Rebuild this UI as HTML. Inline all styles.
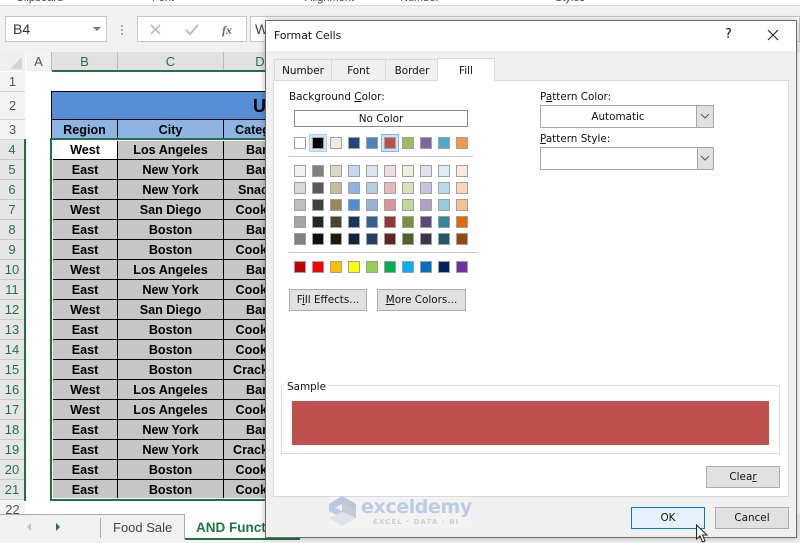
<!DOCTYPE html>
<html>
<head>
<meta charset="utf-8">
<style>
html,body{margin:0;padding:0;width:800px;height:543px;overflow:hidden;background:#fff}
body{position:relative;font-family:"DejaVu Sans","Liberation Sans",sans-serif;font-size:10.4px;color:#111}
.a{position:absolute}
.t{position:absolute;white-space:nowrap;line-height:14px}
.u{text-decoration:underline}
.rh{position:absolute;left:0;width:24px;background:#e6e6e6;border-bottom:1px solid #c8c8c8;text-align:center;font:13px/20px "Liberation Sans",sans-serif;color:#217346;height:19px}
.rn{position:absolute;left:0;width:25px;background:#f3f3f3;border-bottom:1px solid #d0d0d0;text-align:center;font:13px/20px "Liberation Sans",sans-serif;color:#555;height:19px}
.ch{position:absolute;top:52px;height:19px;background:#e1e1e1;text-align:center;font:13px/19px "Liberation Sans",sans-serif;color:#217346;border-right:1px solid #bbb}
.c{position:absolute;height:18px;background:#c6c6c6;text-align:center;font:bold 12.6px/21px "Liberation Sans",sans-serif;color:#000;overflow:hidden;white-space:nowrap}
.b{position:absolute;background:#e1e1e1;border:1px solid #adadad;box-sizing:border-box;text-align:center;line-height:21px;white-space:nowrap}
.s{position:absolute;width:12px;height:12px;border:1px solid #a0a0a0;box-sizing:border-box}
.tab{position:absolute;top:59px;height:21px;background:#f0f0f0;border:1px solid #d9d9d9;border-bottom:0;box-sizing:border-box;text-align:center;line-height:23px}
</style>
</head>
<body>
<!-- Ribbon remains -->
<div class="a" style="left:0;top:0;width:800px;height:5px;background:#fff"></div>
<div class="a" style="left:0;top:-9px;width:800px;height:13px;font:11px/13px 'Liberation Sans',sans-serif;color:#444;white-space:nowrap">
<span class="a" style="left:16px;top:1px">Clipboard</span><span class="a" style="left:152px;top:1px">Font</span><span class="a" style="left:305px;top:1px">Alignment</span><span class="a" style="left:400px;top:1px">Number</span><span class="a" style="left:555px;top:1px">Styles</span></div>
<div class="a" style="left:0;top:5px;width:800px;height:47px;background:#f1f1f1;border-top:1px solid #d8d8d8;box-sizing:border-box"></div>
<div class="a" style="left:5px;top:16px;width:102px;height:26px;background:#fff;border:1px solid #c6c6c6;box-sizing:border-box;font:14px/24px 'Liberation Sans',sans-serif;color:#333;padding-left:7px">B4</div>
<div class="a" style="left:93px;top:27px;width:0;height:0;border-left:4px solid transparent;border-right:4px solid transparent;border-top:4px solid #777"></div>
<div class="a" style="left:121px;top:25px;width:2px;height:2px;background:#aaa;box-shadow:0 4px 0 #aaa,0 8px 0 #aaa"></div>
<div class="a" style="left:137px;top:16px;width:110px;height:26px;background:#fff;border:1px solid #c6c6c6;box-sizing:border-box"></div>
<svg class="a" style="left:148px;top:22px" width="90" height="16" viewBox="0 0 90 16"><path d="M3 3l9 9M12 3l-9 9" stroke="#bdbdbd" stroke-width="1.6" fill="none"/><path d="M38 8l4 4 8-9" stroke="#bdbdbd" stroke-width="2" fill="none"/><text x="74" y="12" font-family="Liberation Serif" font-style="italic" font-weight="bold" font-size="12" fill="#666">fx</text></svg>
<div class="a" style="left:250px;top:16px;width:550px;height:26px;background:#fff;border:1px solid #c6c6c6;box-sizing:border-box;font:14px/24px 'Liberation Sans',sans-serif;color:#444;padding-left:4px">W</div>

<!-- Sheet -->
<div class="a" style="left:0;top:52px;width:800px;height:470px;background:#fff"></div>
<div class="a" style="left:0;top:52px;width:25px;height:19px;background:#efefef"></div>
<div class="a" style="left:10px;top:57px;width:0;height:0;border-left:12px solid transparent;border-bottom:12px solid #d4d4d4"></div>
<div class="ch" style="left:26px;width:25px;background:#f3f3f3;color:#555">A</div>
<div class="ch" style="left:52px;width:65px">B</div>
<div class="ch" style="left:118px;width:105px">C</div>
<div class="ch" style="left:224px;width:72px">D</div>
<div class="a" style="left:52px;top:70px;width:248px;height:2px;background:#217346"></div>

<div class="rn" style="top:72px">1</div>
<div class="rn" style="top:92px;height:27px;line-height:28px">2</div>
<div class="rn" style="top:120px">3</div>
<div class="rh" style="top:140px">4</div><div class="rh" style="top:160px">5</div><div class="rh" style="top:180px">6</div><div class="rh" style="top:200px">7</div><div class="rh" style="top:220px">8</div><div class="rh" style="top:240px">9</div><div class="rh" style="top:260px">10</div><div class="rh" style="top:280px">11</div><div class="rh" style="top:300px">12</div><div class="rh" style="top:320px">13</div><div class="rh" style="top:340px">14</div><div class="rh" style="top:360px">15</div><div class="rh" style="top:380px">16</div><div class="rh" style="top:400px">17</div><div class="rh" style="top:420px">18</div><div class="rh" style="top:440px">19</div><div class="rh" style="top:460px">20</div><div class="rh" style="top:480px">21</div>
<div class="rn" style="top:500px">22</div>
<div class="a" style="left:24px;top:139px;width:2px;height:362px;background:#217346"></div>

<!-- Table -->
<div class="a" style="left:51px;top:91px;width:260px;height:409px;background:#000"></div>
<div class="a" style="left:52px;top:92px;width:259px;height:27px;background:#558ed5;font:bold 18px/29px 'Liberation Sans',sans-serif;color:#000;text-indent:201px">U</div>
<div class="c" style="left:52px;top:120px;width:65px;background:#8db4e2;height:19px">Region</div>
<div class="c" style="left:118px;top:120px;width:105px;background:#8db4e2;height:19px">City</div>
<div class="c" style="left:224px;top:120px;width:80px;background:#8db4e2;height:19px;text-align:left;padding-left:11px">Category</div>

<div class="c" style="left:53px;top:141px;width:64px;background:#fff;line-height:19px">West</div><div class="c" style="left:118px;top:141px;width:105px;line-height:19px">Los Angeles</div><div class="c" style="left:224px;top:141px;width:72px;line-height:19px">Bars</div>
<div class="c" style="left:53px;top:160px;width:64px;height:19px">East</div><div class="c" style="left:118px;top:160px;width:105px;height:19px">New York</div><div class="c" style="left:224px;top:160px;width:72px;height:19px">Bars</div>
<div class="c" style="left:53px;top:180px;width:64px;height:19px">East</div><div class="c" style="left:118px;top:180px;width:105px;height:19px">New York</div><div class="c" style="left:224px;top:180px;width:72px;height:19px">Snacks</div>
<div class="c" style="left:53px;top:200px;width:64px;height:19px">West</div><div class="c" style="left:118px;top:200px;width:105px;height:19px">San Diego</div><div class="c" style="left:224px;top:200px;width:72px;height:19px">Cookies</div>
<div class="c" style="left:53px;top:220px;width:64px;height:19px">East</div><div class="c" style="left:118px;top:220px;width:105px;height:19px">Boston</div><div class="c" style="left:224px;top:220px;width:72px;height:19px">Bars</div>
<div class="c" style="left:53px;top:240px;width:64px;height:19px">East</div><div class="c" style="left:118px;top:240px;width:105px;height:19px">Boston</div><div class="c" style="left:224px;top:240px;width:72px;height:19px">Cookies</div>
<div class="c" style="left:53px;top:260px;width:64px;height:19px">West</div><div class="c" style="left:118px;top:260px;width:105px;height:19px">Los Angeles</div><div class="c" style="left:224px;top:260px;width:72px;height:19px">Bars</div>
<div class="c" style="left:53px;top:280px;width:64px;height:19px">East</div><div class="c" style="left:118px;top:280px;width:105px;height:19px">New York</div><div class="c" style="left:224px;top:280px;width:72px;height:19px">Cookies</div>
<div class="c" style="left:53px;top:300px;width:64px;height:19px">West</div><div class="c" style="left:118px;top:300px;width:105px;height:19px">San Diego</div><div class="c" style="left:224px;top:300px;width:72px;height:19px">Bars</div>
<div class="c" style="left:53px;top:320px;width:64px;height:19px">East</div><div class="c" style="left:118px;top:320px;width:105px;height:19px">Boston</div><div class="c" style="left:224px;top:320px;width:72px;height:19px">Cookies</div>
<div class="c" style="left:53px;top:340px;width:64px;height:19px">East</div><div class="c" style="left:118px;top:340px;width:105px;height:19px">Boston</div><div class="c" style="left:224px;top:340px;width:72px;height:19px">Cookies</div>
<div class="c" style="left:53px;top:360px;width:64px;height:19px">East</div><div class="c" style="left:118px;top:360px;width:105px;height:19px">Boston</div><div class="c" style="left:224px;top:360px;width:72px;height:19px">Crackers</div>
<div class="c" style="left:53px;top:380px;width:64px;height:19px">West</div><div class="c" style="left:118px;top:380px;width:105px;height:19px">Los Angeles</div><div class="c" style="left:224px;top:380px;width:72px;height:19px">Bars</div>
<div class="c" style="left:53px;top:400px;width:64px;height:19px">West</div><div class="c" style="left:118px;top:400px;width:105px;height:19px">Los Angeles</div><div class="c" style="left:224px;top:400px;width:72px;height:19px">Cookies</div>
<div class="c" style="left:53px;top:420px;width:64px;height:19px">East</div><div class="c" style="left:118px;top:420px;width:105px;height:19px">New York</div><div class="c" style="left:224px;top:420px;width:72px;height:19px">Bars</div>
<div class="c" style="left:53px;top:440px;width:64px;height:19px">East</div><div class="c" style="left:118px;top:440px;width:105px;height:19px">New York</div><div class="c" style="left:224px;top:440px;width:72px;height:19px">Crackers</div>
<div class="c" style="left:53px;top:460px;width:64px;height:19px">East</div><div class="c" style="left:118px;top:460px;width:105px;height:19px">Boston</div><div class="c" style="left:224px;top:460px;width:72px;height:19px">Cookies</div>
<div class="c" style="left:53px;top:480px;width:64px;height:18px">East</div><div class="c" style="left:118px;top:480px;width:105px;height:18px">Boston</div><div class="c" style="left:224px;top:480px;width:72px;height:18px">Cookies</div>
<!-- selection border -->
<div class="a" style="left:50px;top:138px;width:270px;height:363px;border:2px solid #217346;box-sizing:border-box"></div>
<div class="a" style="left:52px;top:140px;width:268px;height:1px;background:#fff"></div>
<div class="a" style="left:52px;top:498px;width:268px;height:1px;background:#fff"></div>
<div class="a" style="left:52px;top:140px;width:1px;height:359px;background:#fff"></div>

<!-- Bottom tabs -->
<div class="a" style="left:0;top:514px;width:800px;height:29px;background:#f1f1f1"></div>
<div class="a" style="left:0;top:514px;width:184px;height:1px;background:#ababab"></div>
<div class="a" style="left:27px;top:523px;width:0;height:0;border-top:4px solid transparent;border-bottom:4px solid transparent;border-right:4px solid #c4c4c4"></div>
<div class="a" style="left:56px;top:523px;width:0;height:0;border-top:4px solid transparent;border-bottom:4px solid transparent;border-left:4px solid #217346"></div>
<div class="a" style="left:100px;top:518px;width:1px;height:20px;background:#ababab"></div>
<div class="a" style="left:184px;top:514px;width:1px;height:25px;background:#ababab"></div>
<div class="t" style="left:113px;top:520px;font:13px/16px 'Liberation Sans',sans-serif;color:#444">Food Sale</div>
<div class="a" style="left:185px;top:514px;width:115px;height:24px;background:#fff;border-bottom:2px solid #217346"></div>
<div class="t" style="left:196px;top:520px;font:bold 13.5px/16px 'Liberation Sans',sans-serif;color:#217346">AND Function</div>

<!-- Dialog -->
<div class="a" style="left:265px;top:20px;width:532px;height:518px;background:#f0f0f0;border:1px solid #6e6e6e;box-sizing:border-box;box-shadow:0 0 6px rgba(0,0,0,.3)"></div>
<div class="a" style="left:266px;top:21px;width:530px;height:30px;background:#fff"></div>
<div class="t" style="left:274px;top:29px;font-size:10.8px">Format Cells</div>
<div class="t" style="left:725px;top:28px;font-size:13px">?</div>
<svg class="a" style="left:767px;top:29px" width="12" height="12" viewBox="0 0 12 12"><path d="M1 1l10 10M11 1L1 11" stroke="#222" stroke-width="1.1" fill="none"/></svg>

<div class="tab" style="left:274px;width:58px">Number</div>
<div class="tab" style="left:331px;width:55px">Font</div>
<div class="tab" style="left:385px;width:54px">Border</div>
<div class="a" style="left:273px;top:80px;width:516px;height:417px;background:#fff;border:1px solid #d9d9d9;box-sizing:border-box"></div>
<div class="tab" style="left:437px;top:58px;width:58px;height:23px;background:#fff;line-height:24px;z-index:2">Fill</div>

<div class="t" style="left:289px;top:90px">Background <span class="u">C</span>olor:</div>
<div class="a" style="left:294px;top:110px;width:174px;height:17px;border:1px solid #8a8a8a;box-sizing:border-box;text-align:center;line-height:17px;background:#fff">No Color</div>

<!-- Theme row -->
<div class="a" style="left:309px;top:134px;width:18px;height:18px;background:#cfe5f7;border:1px solid #a9d2f3;box-sizing:border-box"></div>
<div class="a" style="left:381px;top:134px;width:18px;height:18px;background:#cfe5f7;border:1px solid #7bb8ea;box-sizing:border-box"></div>
<div class="s" style="left:294px;top:137px;background:#fff"></div><div class="s" style="left:312px;top:137px;background:#000"></div><div class="s" style="left:330px;top:137px;background:#eeece1"></div><div class="s" style="left:348px;top:137px;background:#1f497d"></div><div class="s" style="left:366px;top:137px;background:#4f81bd"></div><div class="s" style="left:384px;top:137px;background:#c0504d"></div><div class="s" style="left:402px;top:137px;background:#9bbb59"></div><div class="s" style="left:420px;top:137px;background:#8064a2"></div><div class="s" style="left:438px;top:137px;background:#4bacc6"></div><div class="s" style="left:456px;top:137px;background:#f79646"></div>
<div class="a" style="left:289px;top:156px;width:184px;height:1px;background:#c8c8c8"></div>

<div class="s" style="left:294px;top:165px;background:#f2f2f2"></div><div class="s" style="left:312px;top:165px;background:#808080"></div><div class="s" style="left:330px;top:165px;background:#ddd9c4"></div><div class="s" style="left:348px;top:165px;background:#c5d9f1"></div><div class="s" style="left:366px;top:165px;background:#dce6f1"></div><div class="s" style="left:384px;top:165px;background:#f2dcdb"></div><div class="s" style="left:402px;top:165px;background:#ebf1de"></div><div class="s" style="left:420px;top:165px;background:#e4dfec"></div><div class="s" style="left:438px;top:165px;background:#daeef3"></div><div class="s" style="left:456px;top:165px;background:#fde9d9"></div>
<div class="s" style="left:294px;top:182px;background:#d9d9d9"></div><div class="s" style="left:312px;top:182px;background:#595959"></div><div class="s" style="left:330px;top:182px;background:#c4bd97"></div><div class="s" style="left:348px;top:182px;background:#8db4e2"></div><div class="s" style="left:366px;top:182px;background:#b8cce4"></div><div class="s" style="left:384px;top:182px;background:#e6b8b7"></div><div class="s" style="left:402px;top:182px;background:#d8e4bc"></div><div class="s" style="left:420px;top:182px;background:#ccc0da"></div><div class="s" style="left:438px;top:182px;background:#b7dee8"></div><div class="s" style="left:456px;top:182px;background:#fcd5b4"></div>
<div class="s" style="left:294px;top:199px;background:#bfbfbf"></div><div class="s" style="left:312px;top:199px;background:#404040"></div><div class="s" style="left:330px;top:199px;background:#948a54"></div><div class="s" style="left:348px;top:199px;background:#538dd5"></div><div class="s" style="left:366px;top:199px;background:#95b3d7"></div><div class="s" style="left:384px;top:199px;background:#da9694"></div><div class="s" style="left:402px;top:199px;background:#c4d79b"></div><div class="s" style="left:420px;top:199px;background:#b1a0c7"></div><div class="s" style="left:438px;top:199px;background:#92cddc"></div><div class="s" style="left:456px;top:199px;background:#fabf8f"></div>
<div class="s" style="left:294px;top:216px;background:#a6a6a6"></div><div class="s" style="left:312px;top:216px;background:#262626"></div><div class="s" style="left:330px;top:216px;background:#494529"></div><div class="s" style="left:348px;top:216px;background:#16365c"></div><div class="s" style="left:366px;top:216px;background:#366092"></div><div class="s" style="left:384px;top:216px;background:#963634"></div><div class="s" style="left:402px;top:216px;background:#76933c"></div><div class="s" style="left:420px;top:216px;background:#60497a"></div><div class="s" style="left:438px;top:216px;background:#31869b"></div><div class="s" style="left:456px;top:216px;background:#e26b0a"></div>
<div class="s" style="left:294px;top:233px;background:#808080"></div><div class="s" style="left:312px;top:233px;background:#0d0d0d"></div><div class="s" style="left:330px;top:233px;background:#1d1b10"></div><div class="s" style="left:348px;top:233px;background:#0f243e"></div><div class="s" style="left:366px;top:233px;background:#244062"></div><div class="s" style="left:384px;top:233px;background:#632523"></div><div class="s" style="left:402px;top:233px;background:#4f6228"></div><div class="s" style="left:420px;top:233px;background:#403151"></div><div class="s" style="left:438px;top:233px;background:#215967"></div><div class="s" style="left:456px;top:233px;background:#974706"></div>
<div class="a" style="left:289px;top:252px;width:189px;height:1px;background:#c8c8c8"></div>
<div class="s" style="left:294px;top:261px;background:#c00000"></div><div class="s" style="left:312px;top:261px;background:#ff0000"></div><div class="s" style="left:330px;top:261px;background:#ffc000"></div><div class="s" style="left:348px;top:261px;background:#ffff00"></div><div class="s" style="left:366px;top:261px;background:#92d050"></div><div class="s" style="left:384px;top:261px;background:#00b050"></div><div class="s" style="left:402px;top:261px;background:#00b0f0"></div><div class="s" style="left:420px;top:261px;background:#0070c0"></div><div class="s" style="left:438px;top:261px;background:#002060"></div><div class="s" style="left:456px;top:261px;background:#7030a0"></div>

<div class="b" style="left:289px;top:289px;width:78px;height:22px">F<span class="u">i</span>ll Effects...</div>
<div class="b" style="left:377px;top:289px;width:89px;height:22px"><span class="u">M</span>ore Colors...</div>

<div class="t" style="left:540px;top:90px">P<span class="u">a</span>ttern Color:</div>
<div class="a" style="left:540px;top:105px;width:174px;height:23px;background:#fff;border:1px solid #a6a6a6;box-sizing:border-box;text-align:center;line-height:23px;padding-right:18px">Automatic</div>
<div class="a" style="left:696px;top:106px;width:17px;height:21px;background:#e1e1e1;border-left:1px solid #a6a6a6;box-sizing:border-box"></div>
<svg class="a" style="left:700px;top:113px" width="10" height="7" viewBox="0 0 10 7"><path d="M1 1l4 4 4-4" stroke="#555" fill="none"/></svg>
<div class="t" style="left:540px;top:132px"><span class="u">P</span>attern Style:</div>
<div class="a" style="left:540px;top:147px;width:174px;height:23px;background:#fff;border:1px solid #a6a6a6;box-sizing:border-box"></div>
<div class="a" style="left:697px;top:148px;width:16px;height:21px;background:#e1e1e1;border-left:1px solid #a6a6a6;box-sizing:border-box"></div>
<svg class="a" style="left:700px;top:155px" width="10" height="7" viewBox="0 0 10 7"><path d="M1 1l4 4 4-4" stroke="#555" fill="none"/></svg>

<!-- Sample -->
<div class="a" style="left:281px;top:385px;width:499px;height:69px;border:1px solid #dcdcdc;box-sizing:border-box"></div>
<div class="t" style="left:284px;top:380px;background:#fff;padding:0 3px">Sample</div>
<div class="a" style="left:292px;top:401px;width:477px;height:44px;background:#c0504d"></div>

<div class="b" style="left:706px;top:466px;width:74px;height:22px">Clea<span class="u">r</span></div>

<!-- Watermark -->
<div class="a" style="left:329px;top:497px;width:142px;height:31px;background:rgba(255,255,255,.2)"></div>
<svg class="a" style="left:328px;top:495px" width="30" height="32" viewBox="0 0 30 32"><path d="M14 1l14 8v7L14 9 1 16V9z" fill="#b9c6dc"/><path d="M1 9l13 7v7L1 16z" fill="#b5cdee"/><path d="M1 23l13-6 14 6-14 8z" fill="#dde4ea"/><path d="M14 9l14 7v7l-14-6z" fill="#c8ccd0"/></svg>
<div class="t" style="left:361px;top:495px;font:bold 19px/24px 'DejaVu Sans',sans-serif;color:#bccbe9;letter-spacing:-.4px">exceldemy</div>
<div class="t" style="left:373px;top:516px;font:bold 7px/12px 'DejaVu Sans',sans-serif;color:#cfcfcf;letter-spacing:1.1px">EXCEL · DATA · BI</div>

<div class="b" style="left:631px;top:507px;width:74px;height:22px;background:#e5f1fb;border:1px solid #0078d7">OK</div>
<div class="b" style="left:715px;top:507px;width:74px;height:22px">Cancel</div>

<!-- Cursor -->
<svg class="a" style="left:695px;top:524px" width="14" height="19" viewBox="0 0 14 19"><path d="M1.5 1v14l3.5-3 2.500 6 2.500-1-2.500-6h4.500z" fill="#fff" stroke="#222" stroke-width="1"/></svg>
</body>
</html>
